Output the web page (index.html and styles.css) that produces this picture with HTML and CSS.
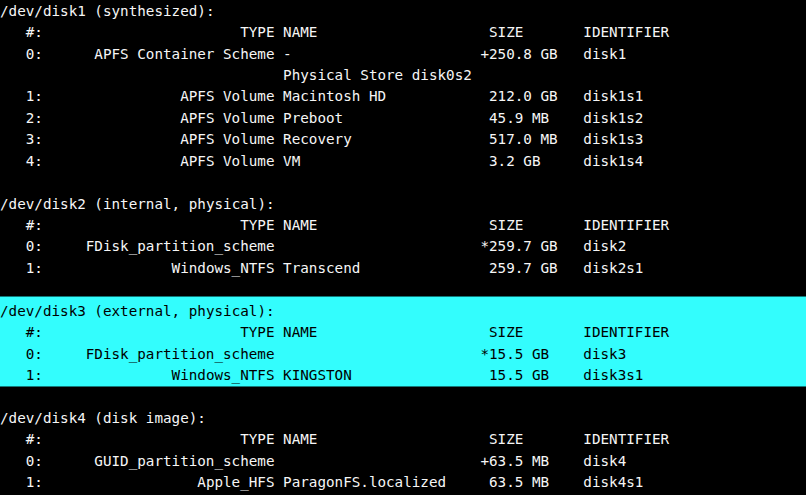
FILE: index.html
```html
<!DOCTYPE html>
<html>
<head>
<meta charset="utf-8">
<link rel="stylesheet" href="styles.css">
</head>
<body>
<div class="term">
  <div class="line">/dev/disk1 (synthesized):</div>
  <div class="row"><span class="num">#:</span><span class="type">TYPE</span><span class="name">NAME</span><span class="flag"></span><span class="size">SIZE</span><span class="id">IDENTIFIER</span></div>
  <div class="row"><span class="num">0:</span><span class="type">APFS Container Scheme</span><span class="name">-</span><span class="flag">+</span><span class="size">250.8 GB</span><span class="id">disk1</span></div>
  <div class="row"><span class="num"></span><span class="type"></span><span class="name">Physical Store disk0s2</span><span class="flag"></span><span class="size"></span><span class="id"></span></div>
  <div class="row"><span class="num">1:</span><span class="type">APFS Volume</span><span class="name">Macintosh HD</span><span class="flag"></span><span class="size">212.0 GB</span><span class="id">disk1s1</span></div>
  <div class="row"><span class="num">2:</span><span class="type">APFS Volume</span><span class="name">Preboot</span><span class="flag"></span><span class="size">45.9 MB</span><span class="id">disk1s2</span></div>
  <div class="row"><span class="num">3:</span><span class="type">APFS Volume</span><span class="name">Recovery</span><span class="flag"></span><span class="size">517.0 MB</span><span class="id">disk1s3</span></div>
  <div class="row"><span class="num">4:</span><span class="type">APFS Volume</span><span class="name">VM</span><span class="flag"></span><span class="size">3.2 GB</span><span class="id">disk1s4</span></div>
  <div class="line"></div>
  <div class="line">/dev/disk2 (internal, physical):</div>
  <div class="row"><span class="num">#:</span><span class="type">TYPE</span><span class="name">NAME</span><span class="flag"></span><span class="size">SIZE</span><span class="id">IDENTIFIER</span></div>
  <div class="row"><span class="num">0:</span><span class="type">FDisk_partition_scheme</span><span class="name"></span><span class="flag">*</span><span class="size">259.7 GB</span><span class="id">disk2</span></div>
  <div class="row"><span class="num">1:</span><span class="type">Windows_NTFS</span><span class="name">Transcend</span><span class="flag"></span><span class="size">259.7 GB</span><span class="id">disk2s1</span></div>
  <div class="line"></div>
  <div class="selected">
    <div class="line">/dev/disk3 (external, physical):</div>
    <div class="row"><span class="num">#:</span><span class="type">TYPE</span><span class="name">NAME</span><span class="flag"></span><span class="size">SIZE</span><span class="id">IDENTIFIER</span></div>
    <div class="row"><span class="num">0:</span><span class="type">FDisk_partition_scheme</span><span class="name"></span><span class="flag">*</span><span class="size">15.5 GB</span><span class="id">disk3</span></div>
    <div class="row"><span class="num">1:</span><span class="type">Windows_NTFS</span><span class="name">KINGSTON</span><span class="flag"></span><span class="size">15.5 GB</span><span class="id">disk3s1</span></div>
  </div>
  <div class="line"></div>
  <div class="line">/dev/disk4 (disk image):</div>
  <div class="row"><span class="num">#:</span><span class="type">TYPE</span><span class="name">NAME</span><span class="flag"></span><span class="size">SIZE</span><span class="id">IDENTIFIER</span></div>
  <div class="row"><span class="num">0:</span><span class="type">GUID_partition_scheme</span><span class="name"></span><span class="flag">+</span><span class="size">63.5 MB</span><span class="id">disk4</span></div>
  <div class="row"><span class="num">1:</span><span class="type">Apple_HFS</span><span class="name">ParagonFS.localized</span><span class="flag"></span><span class="size">63.5 MB</span><span class="id">disk4s1</span></div>
</div>
</body>
</html>
```

FILE: styles.css
```css
html, body {
  margin: 0;
  padding: 0;
  background: #000;
  overflow: hidden;
}

.term {
  margin-top: 0.8px;
  font-family: "DejaVu Sans Mono", "Liberation Mono", monospace;
  font-size: 14.25px;
  line-height: 21.43px;
  color: #f6f6f6;
}

.line {
  height: 21.43px;
  white-space: pre;
}

.row {
  display: grid;
  grid-template-columns: 5ch 27ch 24ch 1ch 11ch auto;
  height: 21.43px;
  white-space: pre;
}

.num {
  text-align: right;
}

.type {
  text-align: right;
}

.name {
  padding-left: 1ch;
}

.selected {
  margin-top: -3.3px;
  padding-top: 3.3px;
  background: #33fdfd;
  color: #000;
  box-shadow: 0 -1px 0 #137a7a, 0 1px 0 #137a7a;
}
```
